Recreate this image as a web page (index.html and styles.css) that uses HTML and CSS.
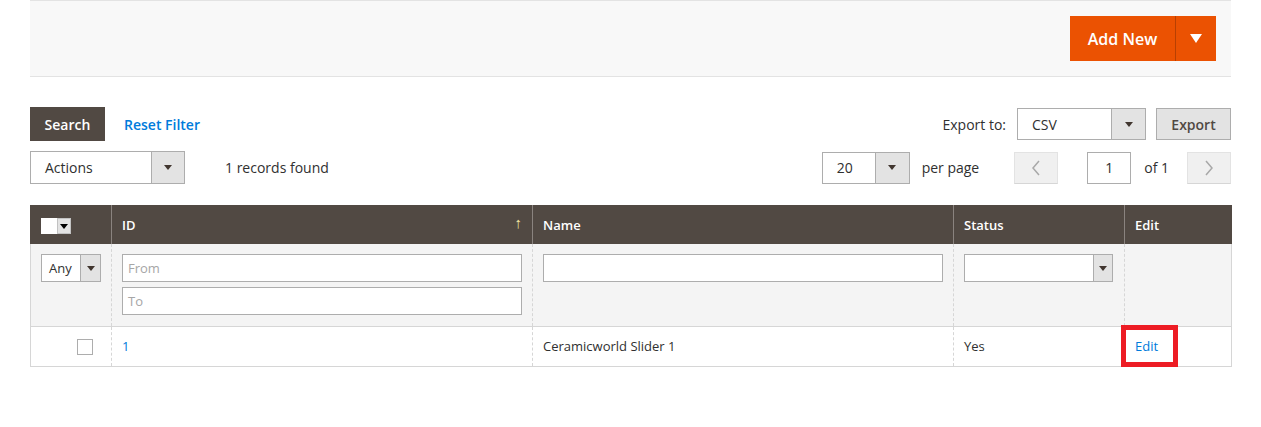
FILE: index.html
```html
<!DOCTYPE html>
<html lang="en">
<head>
    <meta charset="UTF-8">
    <title>Sliders</title>
    <link rel="stylesheet" href="styles.css">
</head>
<body>

<div class="page">
    <div class="page-actions">
        <div class="split-button">
            <button class="add-new">Add New</button>
            <button class="add-toggle"><span class="tri-white"></span></button>
        </div>
    </div>

    <div class="grid-toolbar">
        <div class="toolbar-left">
            <button class="btn-search">Search</button>
            <a class="reset-link" href="#">Reset Filter</a>
        </div>
        <div class="toolbar-right">
            <span class="export-label">Export to:</span>
            <div class="select export-select">
                <span class="select-value">CSV</span>
                <span class="select-arrow"><span class="tri"></span></span>
            </div>
            <button class="btn-export">Export</button>
        </div>
    </div>

    <div class="grid-toolbar second">
        <div class="toolbar-left">
            <div class="select actions-select">
                <span class="select-value">Actions</span>
                <span class="select-arrow"><span class="tri"></span></span>
            </div>
            <span class="records">1 records found</span>
        </div>
        <div class="toolbar-right">
            <div class="select limit-select">
                <span class="select-value">20</span>
                <span class="select-arrow"><span class="tri"></span></span>
            </div>
            <span class="per-page">per page</span>
            <button class="pager-btn">
                <svg width="10" height="16" viewBox="0 0 10 16"><polyline points="8,1 2,8 8,15" fill="none" stroke="#a8a8a8" stroke-width="1.5"/></svg>
            </button>
            <div class="page-input">1</div>
            <span class="of-pages">of 1</span>
            <button class="pager-btn">
                <svg width="10" height="16" viewBox="0 0 10 16"><polyline points="2,1 8,8 2,15" fill="none" stroke="#a8a8a8" stroke-width="1.5"/></svg>
            </button>
        </div>
    </div>

    <table class="grid">
        <colgroup>
            <col style="width:81px">
            <col style="width:421px">
            <col style="width:421px">
            <col style="width:171px">
            <col style="width:107px">
        </colgroup>
        <thead>
            <tr class="headings">
                <th><span class="mass-select"><span class="mass-box"></span><span class="mass-arrow"><span class="tri-black"></span></span></span></th>
                <th class="sorted">ID<span class="sort-arrow">&#8593;</span></th>
                <th>Name</th>
                <th>Status</th>
                <th>Edit</th>
            </tr>
            <tr class="filters">
                <td>
                    <div class="select any-select">
                        <span class="select-value">Any</span>
                        <span class="select-arrow"><span class="tri"></span></span>
                    </div>
                </td>
                <td>
                    <div class="input-text placeholder">From</div>
                    <div class="input-text placeholder">To</div>
                </td>
                <td><div class="input-text"></div></td>
                <td>
                    <div class="select status-select">
                        <span class="select-value"></span>
                        <span class="select-arrow"><span class="tri"></span></span>
                    </div>
                </td>
                <td></td>
            </tr>
        </thead>
        <tbody>
            <tr class="data-row">
                <td class="check-cell"><span class="checkbox"></span></td>
                <td><a href="#" class="id-link">1</a></td>
                <td>Ceramicworld Slider 1</td>
                <td>Yes</td>
                <td class="edit-cell"><a href="#" class="edit-link">Edit</a></td>
            </tr>
        </tbody>
    </table>
</div>

</body>
</html>
```

FILE: styles.css
```css
body {
    margin: 0;
    background-color: #fff;
    font-family: "Open Sans", "Liberation Sans", sans-serif;
    font-size: 14px;
    color: #303030;
}
.page {
    width: 1201px;
    margin-left: 30px;
}
button {
    font-family: inherit;
    cursor: pointer;
}
.page-actions {
    height: 75px;
    background-color: #f8f8f8;
    border-top: 1px solid #e3e3e3;
    border-bottom: 1px solid #e3e3e3;
    display: flex;
    justify-content: flex-end;
    align-items: flex-start;
    padding-right: 15px;
}
.split-button {
    display: flex;
    margin-top: 15px;
    height: 45px;
}
.add-new {
    background-color: #eb5202;
    border: none;
    color: #fff;
    font-size: 16px;
    font-weight: 600;
    padding: 0 17px;
    width: 105px;
    height: 45px;
}
.add-toggle {
    background-color: #eb5202;
    border: none;
    border-left: 1px solid #b84002;
    width: 41px;
    height: 45px;
    display: flex;
    align-items: center;
    justify-content: center;
    padding: 0;
}
.tri-white {
    width: 0;
    height: 0;
    border-left: 6px solid transparent;
    border-right: 6px solid transparent;
    border-top: 9px solid #fff;
}
.grid-toolbar {
    display: flex;
    justify-content: space-between;
    align-items: center;
    margin-top: 30px;
    height: 34px;
}
.grid-toolbar.second {
    margin-top: 10px;
    height: 33px;
}
.toolbar-left, .toolbar-right {
    display: flex;
    align-items: center;
}
.btn-search {
    background-color: #514943;
    color: #fff;
    border: none;
    font-size: 14px;
    font-weight: 600;
    height: 34px;
    width: 75px;
    padding: 0;
}
.reset-link {
    color: #007bdb;
    font-weight: 600;
    text-decoration: none;
    margin-left: 19px;
}
.export-label {
    margin-right: 11px;
}
.select {
    display: flex;
    background-color: #fff;
    border: 1px solid #adadad;
    box-sizing: border-box;
    align-items: stretch;
}
.select-value {
    flex: 1;
    display: flex;
    align-items: center;
    padding-left: 14px;
}
.select-arrow {
    width: 32px;
    background-color: #e3e3e3;
    border-left: 1px solid #adadad;
    display: flex;
    align-items: center;
    justify-content: center;
}
.tri {
    width: 0;
    height: 0;
    border-left: 4px solid transparent;
    border-right: 4px solid transparent;
    border-top: 5px solid #41362f;
}
.export-select {
    width: 129px;
    height: 32px;
}
.export-select .select-arrow {
    width: 33px;
}
.btn-export {
    margin-left: 10px;
    width: 75px;
    height: 32px;
    background-color: #e3e3e3;
    border: 1px solid #adadad;
    color: #514943;
    font-size: 14px;
    font-weight: 600;
    padding: 0;
}
.actions-select {
    width: 155px;
    height: 33px;
}
.records {
    margin-left: 40px;
}
.limit-select {
    width: 88px;
    height: 32px;
}
.limit-select .select-arrow {
    width: 33px;
}
.per-page {
    margin-left: 12px;
    margin-right: 35px;
}
.pager-btn {
    width: 44px;
    height: 32px;
    background-color: #f0f0f0;
    border: 1px solid #e3e3e3;
    border-bottom-color: #d6d6d6;
    display: flex;
    align-items: center;
    justify-content: center;
    padding: 0;
}
.page-input {
    margin-left: 29px;
    width: 44px;
    height: 32px;
    border: 1px solid #adadad;
    box-sizing: border-box;
    display: flex;
    align-items: center;
    justify-content: center;
}
.of-pages {
    margin-left: 13px;
    margin-right: 18px;
}
.grid {
    margin-top: 21px;
    width: 1201px;
    border-collapse: collapse;
    table-layout: fixed;
    font-size: 13px;
}
.headings th {
    background-color: #514943;
    color: #fff;
    font-weight: 600;
    text-align: left;
    height: 39px;
    padding: 0 10px;
    border-left: 1px solid #8a837f;
    border-right: 1px solid #8a837f;
    box-sizing: border-box;
}
.headings th:first-child {
    border-left-color: #514943;
}
.headings th:last-child {
    border-right-color: #514943;
}
.sorted {
    position: relative;
}
.sort-arrow {
    position: absolute;
    right: 10px;
    top: 7px;
    color: #f5e6a4;
    font-size: 15px;
    font-weight: 400;
}
.mass-select {
    display: inline-flex;
    vertical-align: middle;
    margin-top: 2px;
}
.mass-box {
    width: 16px;
    height: 16px;
    background-color: #fff;
}
.mass-arrow {
    width: 14px;
    height: 16px;
    background-color: #e3e3e3;
    display: flex;
    align-items: center;
    justify-content: center;
    box-sizing: border-box;
    border: 1px solid #c2c2c2;
}
.tri-black {
    width: 0;
    height: 0;
    border-left: 4px solid transparent;
    border-right: 4px solid transparent;
    border-top: 5px solid #000;
}
.filters td {
    background-color: #f4f4f4;
    height: 82px;
    padding: 10px;
    vertical-align: top;
    box-sizing: border-box;
    border-left: 1px dashed #d6d6d6;
    border-right: 1px dashed #d6d6d6;
    border-bottom: 1px solid #d6d6d6;
}
.filters td:first-child {
    border-left: 1px solid #d6d6d6;
}
.filters td:last-child {
    border-right: 1px solid #d6d6d6;
}
.any-select {
    width: 60px;
    height: 28px;
    font-size: 13px;
}
.any-select .select-value {
    padding-left: 7px;
}
.any-select .select-arrow {
    width: 19px;
}
.input-text {
    height: 28px;
    background-color: #fff;
    border: 1px solid #adadad;
    box-sizing: border-box;
    padding-left: 5px;
    display: flex;
    align-items: center;
    font-size: 13px;
}
.input-text + .input-text {
    margin-top: 5px;
}
.placeholder {
    color: #a6a6a6;
}
.status-select {
    width: 149px;
    height: 28px;
}
.status-select .select-arrow {
    width: 18px;
}
.data-row td {
    height: 40px;
    padding: 0 10px;
    box-sizing: border-box;
    border-left: 1px dashed #d6d6d6;
    border-right: 1px dashed #d6d6d6;
    border-bottom: 1px solid #d6d6d6;
    color: #303030;
}
.data-row td:first-child {
    border-left: 1px solid #d6d6d6;
}
.data-row td:last-child {
    border-right: 1px solid #d6d6d6;
}
.data-row td.check-cell {
    padding-left: 46px;
}
.checkbox {
    display: inline-block;
    width: 16px;
    height: 16px;
    border: 1px solid #adadad;
    box-sizing: border-box;
    background-color: #fff;
    vertical-align: -4px;
}
.id-link {
    color: #007bdb;
    text-decoration: none;
}
.edit-cell {
    position: relative;
}
.edit-link {
    color: #007bdb;
    text-decoration: none;
    position: relative;
    z-index: 1;
}
.edit-cell::after {
    content: "";
    position: absolute;
    left: -4px;
    top: -2px;
    width: 57px;
    height: 42px;
    border: 5px solid #ed1c24;
    box-sizing: border-box;
}
```
